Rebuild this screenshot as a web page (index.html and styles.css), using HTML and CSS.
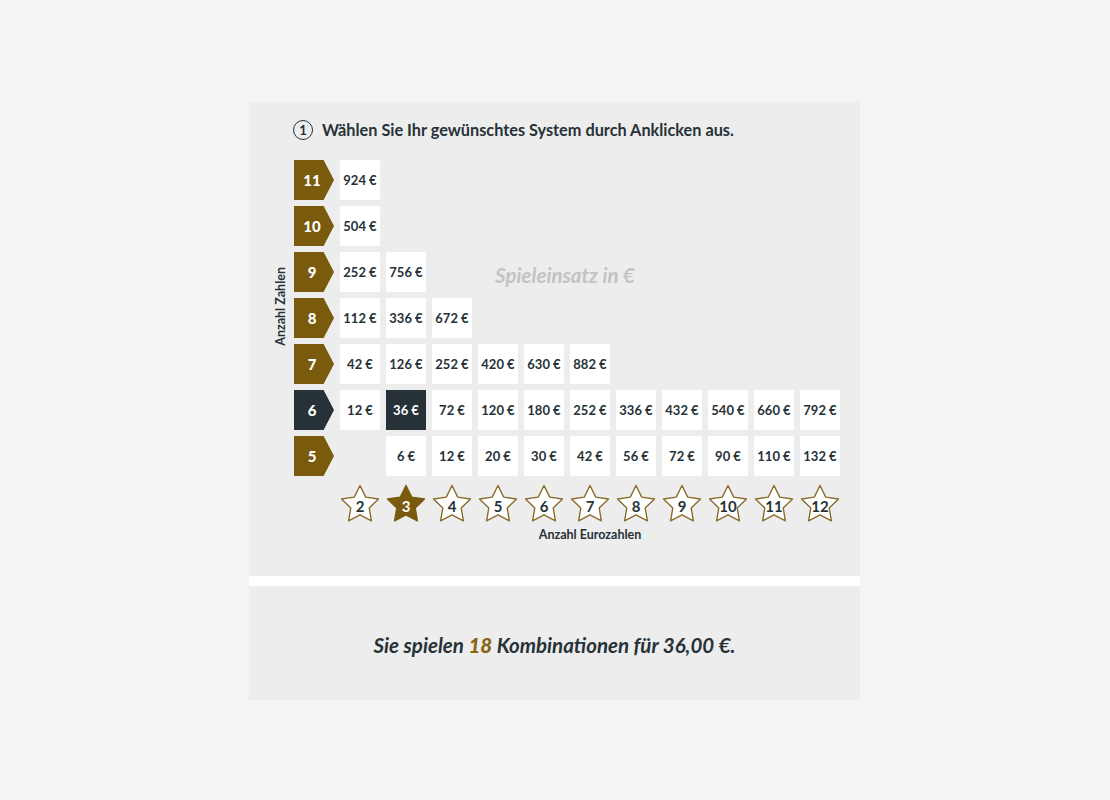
FILE: index.html
```html
<!DOCTYPE html>
<html lang="de">
<head>
    <meta charset="UTF-8">
    <meta name="viewport" content="width=device-width, initial-scale=1.0">
    <title>Systemschein - Systemauswahl</title>
    <link rel="stylesheet" href="styles.css">
</head>
<body>

    <div class="system-box">
        <section class="panel picker">
            <h2 class="step"><span class="step-no">1</span>Wählen Sie Ihr gewünschtes System durch Anklicken aus.</h2>

            <div class="board">
                <div class="axis-y">Anzahl Zahlen</div>

                <div class="matrix">
                    <!-- 11 Zahlen -->
                    <div class="row-label">11</div>
                    <div class="cell">924 €</div>

                    <!-- 10 Zahlen -->
                    <div class="row-label">10</div>
                    <div class="cell">504 €</div>

                    <!-- 9 Zahlen -->
                    <div class="row-label">9</div>
                    <div class="cell">252 €</div>
                    <div class="cell">756 €</div>
                    <div class="stake-hint">Spieleinsatz in €</div>

                    <!-- 8 Zahlen -->
                    <div class="row-label">8</div>
                    <div class="cell">112 €</div>
                    <div class="cell">336 €</div>
                    <div class="cell">672 €</div>

                    <!-- 7 Zahlen -->
                    <div class="row-label">7</div>
                    <div class="cell">42 €</div>
                    <div class="cell">126 €</div>
                    <div class="cell">252 €</div>
                    <div class="cell">420 €</div>
                    <div class="cell">630 €</div>
                    <div class="cell">882 €</div>

                    <!-- 6 Zahlen -->
                    <div class="row-label active">6</div>
                    <div class="cell">12 €</div>
                    <div class="cell active">36 €</div>
                    <div class="cell">72 €</div>
                    <div class="cell">120 €</div>
                    <div class="cell">180 €</div>
                    <div class="cell">252 €</div>
                    <div class="cell">336 €</div>
                    <div class="cell">432 €</div>
                    <div class="cell">540 €</div>
                    <div class="cell">660 €</div>
                    <div class="cell">792 €</div>

                    <!-- 5 Zahlen -->
                    <div class="row-label">5</div>
                    <div class="cell from-3">6 €</div>
                    <div class="cell">12 €</div>
                    <div class="cell">20 €</div>
                    <div class="cell">30 €</div>
                    <div class="cell">42 €</div>
                    <div class="cell">56 €</div>
                    <div class="cell">72 €</div>
                    <div class="cell">90 €</div>
                    <div class="cell">110 €</div>
                    <div class="cell">132 €</div>

                    <!-- Eurozahlen -->
                    <div class="star from-2"><svg viewBox="0 0 40 40"><path d="M20 1.5 L25.7 13.1 L38.5 15 L29.2 24 L31.4 36.8 L20 30.8 L8.6 36.8 L10.8 24 L1.5 15 L14.3 13.1 Z"/></svg><span>2</span></div>
                    <div class="star active"><svg viewBox="0 0 40 40"><path d="M20 1.5 L25.7 13.1 L38.5 15 L29.2 24 L31.4 36.8 L20 30.8 L8.6 36.8 L10.8 24 L1.5 15 L14.3 13.1 Z"/></svg><span>3</span></div>
                    <div class="star"><svg viewBox="0 0 40 40"><path d="M20 1.5 L25.7 13.1 L38.5 15 L29.2 24 L31.4 36.8 L20 30.8 L8.6 36.8 L10.8 24 L1.5 15 L14.3 13.1 Z"/></svg><span>4</span></div>
                    <div class="star"><svg viewBox="0 0 40 40"><path d="M20 1.5 L25.7 13.1 L38.5 15 L29.2 24 L31.4 36.8 L20 30.8 L8.6 36.8 L10.8 24 L1.5 15 L14.3 13.1 Z"/></svg><span>5</span></div>
                    <div class="star"><svg viewBox="0 0 40 40"><path d="M20 1.5 L25.7 13.1 L38.5 15 L29.2 24 L31.4 36.8 L20 30.8 L8.6 36.8 L10.8 24 L1.5 15 L14.3 13.1 Z"/></svg><span>6</span></div>
                    <div class="star"><svg viewBox="0 0 40 40"><path d="M20 1.5 L25.7 13.1 L38.5 15 L29.2 24 L31.4 36.8 L20 30.8 L8.6 36.8 L10.8 24 L1.5 15 L14.3 13.1 Z"/></svg><span>7</span></div>
                    <div class="star"><svg viewBox="0 0 40 40"><path d="M20 1.5 L25.7 13.1 L38.5 15 L29.2 24 L31.4 36.8 L20 30.8 L8.6 36.8 L10.8 24 L1.5 15 L14.3 13.1 Z"/></svg><span>8</span></div>
                    <div class="star"><svg viewBox="0 0 40 40"><path d="M20 1.5 L25.7 13.1 L38.5 15 L29.2 24 L31.4 36.8 L20 30.8 L8.6 36.8 L10.8 24 L1.5 15 L14.3 13.1 Z"/></svg><span>9</span></div>
                    <div class="star"><svg viewBox="0 0 40 40"><path d="M20 1.5 L25.7 13.1 L38.5 15 L29.2 24 L31.4 36.8 L20 30.8 L8.6 36.8 L10.8 24 L1.5 15 L14.3 13.1 Z"/></svg><span>10</span></div>
                    <div class="star"><svg viewBox="0 0 40 40"><path d="M20 1.5 L25.7 13.1 L38.5 15 L29.2 24 L31.4 36.8 L20 30.8 L8.6 36.8 L10.8 24 L1.5 15 L14.3 13.1 Z"/></svg><span>11</span></div>
                    <div class="star"><svg viewBox="0 0 40 40"><path d="M20 1.5 L25.7 13.1 L38.5 15 L29.2 24 L31.4 36.8 L20 30.8 L8.6 36.8 L10.8 24 L1.5 15 L14.3 13.1 Z"/></svg><span>12</span></div>

                    <div class="axis-x">Anzahl Eurozahlen</div>
                </div>
            </div>
        </section>

        <section class="panel summary">
            <p>Sie spielen <strong>18</strong> Kombinationen für 36,00 €.</p>
        </section>
    </div>

</body>
</html>
```

FILE: styles.css
```css
body {
    font-family: Lato, 'Noto Sans', sans-serif;
    background-color: #f4f4f4;
    color: #263238;
    margin: 0;
    padding: 102px 0 0;
}

.system-box {
    width: 611px;
    margin: 0 0 0 249px;
    background: #fff;
}

.panel {
    background: #ededed;
    box-sizing: border-box;
}

.picker {
    height: 474px;
    padding: 18px 0 0 26px;
}

.summary {
    height: 114px;
    margin-top: 10px;
    display: flex;
    align-items: center;
    justify-content: center;
}

/* Schritt-Ueberschrift */
.step {
    display: flex;
    align-items: center;
    gap: 9px;
    margin: 0 0 20px 18px;
    font-size: 16.3px;
    font-weight: 700;
    line-height: 20px;
    color: #263238;
}

.step-no {
    width: 18px;
    height: 18px;
    border: 1.5px solid #263238;
    border-radius: 50%;
    display: flex;
    align-items: center;
    justify-content: center;
    font-size: 13px;
    font-weight: 700;
}

.board {
    display: flex;
}

.axis-y {
    width: 12px;
    writing-mode: vertical-rl;
    transform: rotate(180deg);
    font-size: 12.5px;
    font-weight: 700;
    line-height: 12px;
    margin: 107px 7px 0 0;
    align-self: flex-start;
}

/* Systemmatrix: Spalte 1 = Zahlen, Spalten 2-12 = Eurozahlen 2 bis 12 */
.matrix {
    display: grid;
    grid-template-columns: 40px repeat(11, 40px);
    grid-auto-rows: 40px;
    column-gap: 6px;
    row-gap: 6px;
}

.row-label {
    grid-column: 1;
    background: #7a5a0c;
    color: #fff;
    font-size: 15px;
    font-weight: 900;
    display: flex;
    align-items: center;
    justify-content: center;
    padding-right: 4px;
    clip-path: polygon(0 0, 74% 0, 100% 50%, 74% 100%, 0 100%);
}

.row-label.active {
    background: #263238;
}

.cell {
    background: #fff;
    display: flex;
    align-items: center;
    justify-content: center;
    font-size: 13px;
    font-weight: 700;
    cursor: pointer;
}

.cell.active {
    background: #263238;
    color: #fff;
}

.from-2 {
    grid-column-start: 2;
}

.from-3 {
    grid-column-start: 3;
}

.stake-hint {
    grid-column: 5 / 9;
    align-self: center;
    text-align: center;
    margin: 6px 4px 0 0;
    font-size: 20.5px;
    font-weight: 700;
    font-style: italic;
    color: #c3c3c3;
}

.star {
    position: relative;
    height: 40px;
    margin-top: 2px;
    display: flex;
    align-items: center;
    justify-content: center;
    cursor: pointer;
}

.star svg {
    position: absolute;
    inset: 0;
    width: 40px;
    height: 40px;
}

.star path {
    fill: #fff;
    stroke: #8a6d2a;
    stroke-width: 1.4;
    stroke-linejoin: round;
}

.star span {
    position: relative;
    font-size: 15px;
    font-weight: 700;
    padding-top: 4px;
}

.star.active path {
    fill: #7a5a0c;
    stroke: #7a5a0c;
}

.star.active span {
    color: #fff;
}

.axis-x {
    grid-column: 2 / 13;
    height: 14px;
    margin-top: -1px;
    text-align: center;
    font-size: 12.5px;
    font-weight: 700;
}

.summary p {
    margin: 4px 0 0;
    font-size: 20.5px;
    font-weight: 700;
    font-style: italic;
}

.summary strong {
    color: #8a6614;
}
```
